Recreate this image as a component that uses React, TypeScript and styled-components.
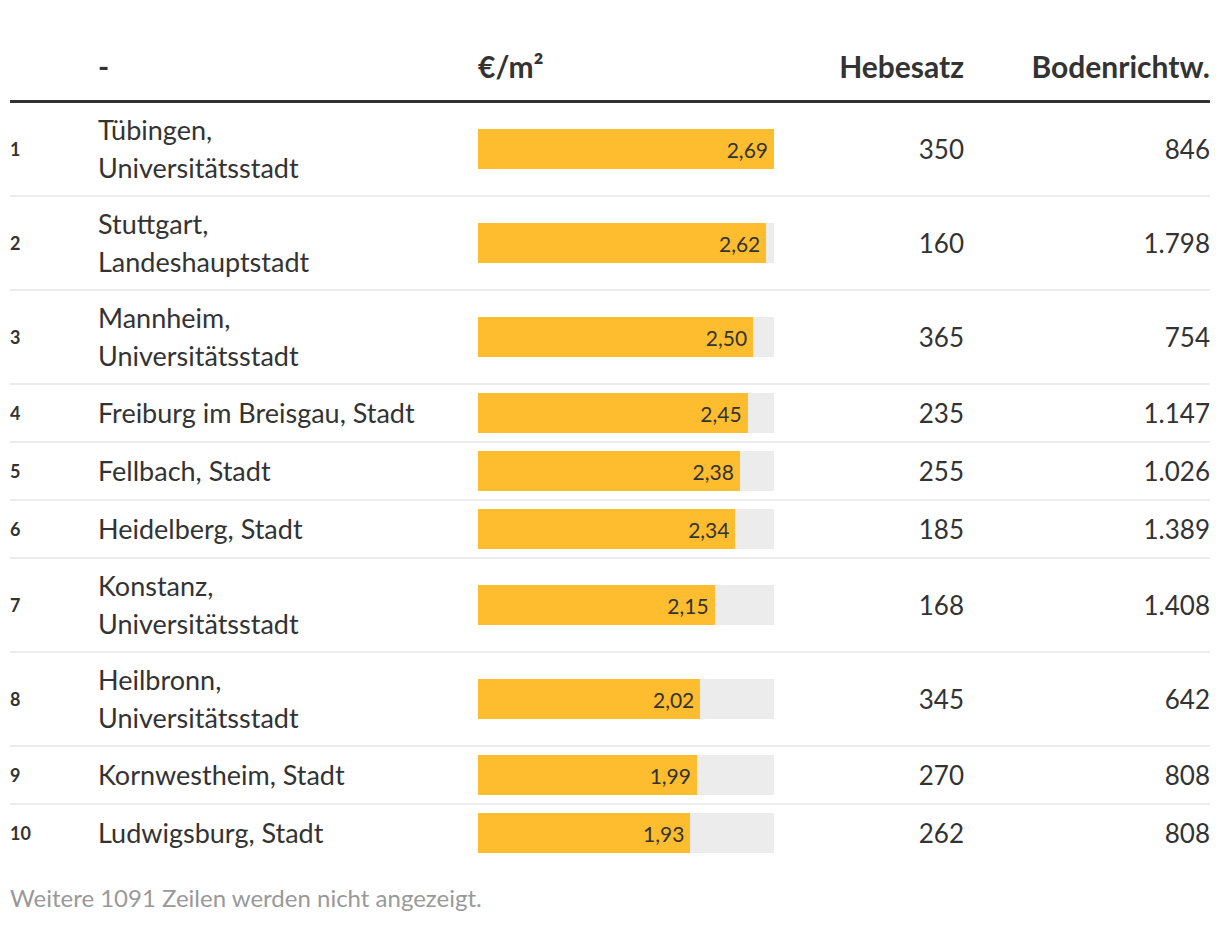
import React from "react";
import styled, { createGlobalStyle } from "styled-components";

const Global = createGlobalStyle`
  html, body { margin: 0; padding: 0; background: #fff; }
  body { font-family: Lato, "Noto Sans", sans-serif; color: #333; }
`;

const Page = styled.div`
  padding: 48px 10px 0 10px;
`;

const COLS = "88px 380px 296px 190px 246px";

const HeaderRow = styled.div`
  display: grid;
  grid-template-columns: ${COLS};
  align-items: center;
  padding-bottom: 16px;
  border-bottom: 3px solid #333;
`;

const HeadCell = styled.div<{ $align?: string }>`
  font-weight: 700;
  font-size: 30px;
  line-height: 36px;
  text-align: ${(p) => p.$align || "left"};
`;

const Row = styled.div`
  display: grid;
  grid-template-columns: ${COLS};
  align-items: center;
  padding: 8px 0;
  border-bottom: 2px solid #ececec;
  &:last-child { border-bottom: none; }
`;

const Rank = styled.div`
  font-weight: 700;
  font-size: 18px;
`;

const Name = styled.div`
  font-size: 27px;
  line-height: 38px;
  white-space: pre-line;
`;

const BarTrack = styled.div`
  height: 40px;
  background: #ececec;
`;

const BarFill = styled.div`
  height: 100%;
  background: #febd2f;
  display: flex;
  align-items: center;
  justify-content: flex-end;
  padding-right: 6px;
  box-sizing: border-box;
  font-size: 21px;
`;

const Num = styled.div`
  font-size: 26px;
  line-height: 36px;
  text-align: right;
`;

const Footer = styled.div`
  margin-top: 22px;
  font-size: 24px;
  line-height: 30px;
  color: #999;
`;

const data: [string, number, number, string][] = [
  ["Tübingen,\nUniversitätsstadt", 2.69, 350, "846"],
  ["Stuttgart,\nLandeshauptstadt", 2.62, 160, "1.798"],
  ["Mannheim,\nUniversitätsstadt", 2.5, 365, "754"],
  ["Freiburg im Breisgau, Stadt", 2.45, 235, "1.147"],
  ["Fellbach, Stadt", 2.38, 255, "1.026"],
  ["Heidelberg, Stadt", 2.34, 185, "1.389"],
  ["Konstanz,\nUniversitätsstadt", 2.15, 168, "1.408"],
  ["Heilbronn,\nUniversitätsstadt", 2.02, 345, "642"],
  ["Kornwestheim, Stadt", 1.99, 270, "808"],
  ["Ludwigsburg, Stadt", 1.93, 262, "808"],
];

const MAX = 2.69;

export default function App() {
  return (
    <Page>
      <Global />
      <HeaderRow>
        <HeadCell />
        <HeadCell>-</HeadCell>
        <HeadCell>€/m²</HeadCell>
        <HeadCell $align="right">Hebesatz</HeadCell>
        <HeadCell $align="right">Bodenrichtw.</HeadCell>
      </HeaderRow>
      <div>
        {data.map(([name, v, h, b], i) => (
          <Row key={i}>
            <Rank>{i + 1}</Rank>
            <Name>{name}</Name>
            <BarTrack>
              <BarFill style={{ width: `${(v / MAX) * 100}%` }}>
                {v.toFixed(2).replace(".", ",")}
              </BarFill>
            </BarTrack>
            <Num>{h}</Num>
            <Num>{b}</Num>
          </Row>
        ))}
      </div>
      <Footer>Weitere 1091 Zeilen werden nicht angezeigt.</Footer>
    </Page>
  );
}
